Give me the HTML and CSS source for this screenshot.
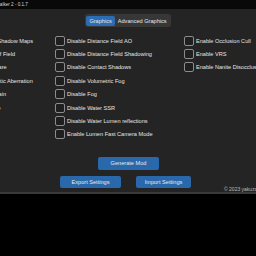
FILE: index.html
```html
<!DOCTYPE html>
<html lang="en">
<head>
    <meta charset="UTF-8">
    <meta name="viewport" content="width=device-width, initial-scale=1.0">
    <title>Stalker 2 - 0.1.7</title>
    <link rel="stylesheet" href="styles.css">
</head>
<body>
    <div class="titlebar"><span class="title">Stalker 2 - 0.1.7</span></div>

    <div class="panel">
        <!-- Tabs -->
        <div class="tabs">
            <div class="tab-group">
                <div class="tab active">Graphics</div>
                <div class="tab">Advanced Graphics</div>
            </div>
        </div>

        <!-- Option columns -->
        <div class="options">
            <div class="col col-left">
                <label class="opt"><span class="box"></span>Disable Virtual Shadow Maps</label>
                <label class="opt"><span class="box"></span>Disable Depth of Field</label>
                <label class="opt"><span class="box"></span>Disable Lens Flare</label>
                <label class="opt"><span class="box"></span>Disable Chromatic Aberration</label>
                <label class="opt"><span class="box"></span>Disable Film Grain</label>
                <label class="opt"><span class="box"></span>Disable Vignette</label>
            </div>
            <div class="col col-mid">
                <label class="opt"><span class="box"></span>Disable Distance Field AO</label>
                <label class="opt"><span class="box"></span>Disable Distance Field Shadowing</label>
                <label class="opt"><span class="box"></span>Disable Contact Shadows</label>
                <label class="opt"><span class="box"></span>Disable Volumetric Fog</label>
                <label class="opt"><span class="box"></span>Disable Fog</label>
                <label class="opt"><span class="box"></span>Disable Water SSR</label>
                <label class="opt"><span class="box"></span>Disable Water Lumen reflections</label>
                <label class="opt"><span class="box"></span>Enable Lumen Fast Camera Mode</label>
            </div>
            <div class="col col-right">
                <label class="opt"><span class="box"></span>Enable Occlusion Cull</label>
                <label class="opt"><span class="box"></span>Enable VRS</label>
                <label class="opt"><span class="box"></span>Enable Nanite Disocclusion</label>
            </div>
        </div>

        <!-- Actions -->
        <div class="generate-row">
            <button class="btn btn-generate">Generate Mod</button>
        </div>
        <div class="btn-row">
            <button class="btn btn-export">Export Settings</button>
            <button class="btn btn-import">Import Settings</button>
            <span class="footer">© 2023 yakuzadeso</span>
        </div>
    </div>
</body>
</html>
```

FILE: styles.css
```css
html, body { margin: 0; padding: 0; }
body { width: 256px; height: 256px; overflow: hidden; background: #000; color: #e4e4e4; font-family: "Liberation Sans", Arial, sans-serif; font-size: 5.6px; }

.titlebar { height: 9px; background: #090909; line-height: 10px; font-size: 4.6px; color: #d8d8d8; white-space: nowrap; overflow: hidden; }
.title { display: inline-block; margin-left: -4.5px; }

.panel { height: 185px; background: #242424; border-bottom: 2px solid #3a3a3a; overflow: hidden; box-sizing: border-box; }

.tabs { display: flex; justify-content: center; padding-top: 5px; }
.tab-group { display: flex; background: #373737; padding: 1.5px; border-radius: 3px; }
.tab { height: 10px; line-height: 10px; padding: 0 3px; border-radius: 2px; color: #e8e8e8; white-space: nowrap; }
.tab.active { background: #2c6cb4; }

.options { display: flex; margin-top: 7px; margin-left: -52px; }
.col { display: flex; flex-direction: column; flex-shrink: 0; }
.col-left { width: 107px; }
.col-mid { width: 129px; }
.opt { display: flex; align-items: center; height: 13.4px; white-space: nowrap; }
.box { width: 10px; height: 10px; box-sizing: border-box; border: 1.3px solid #8c8c8c; border-radius: 2px; background: #1f1f1f; margin-right: 2px; flex-shrink: 0; }

.generate-row { display: flex; justify-content: center; padding-left: 1px; margin-top: 15.5px; }
.btn { font-family: inherit; font-size: 5.6px; color: #e8e8e8; background: #2a68ac; border: none; border-radius: 2px; padding: 0; cursor: pointer; }
.btn-generate { width: 61px; height: 13px; }
.btn-row { display: flex; align-items: flex-start; gap: 15px; padding-left: 60px; margin-top: 6px; white-space: nowrap; }
.btn-export { width: 61px; height: 12px; flex-shrink: 0; }
.btn-import { width: 55px; height: 12px; flex-shrink: 0; }
.footer { margin-left: 18px; margin-top: 10px; font-size: 5px; color: #bdbdbd; flex-shrink: 0; }
```
